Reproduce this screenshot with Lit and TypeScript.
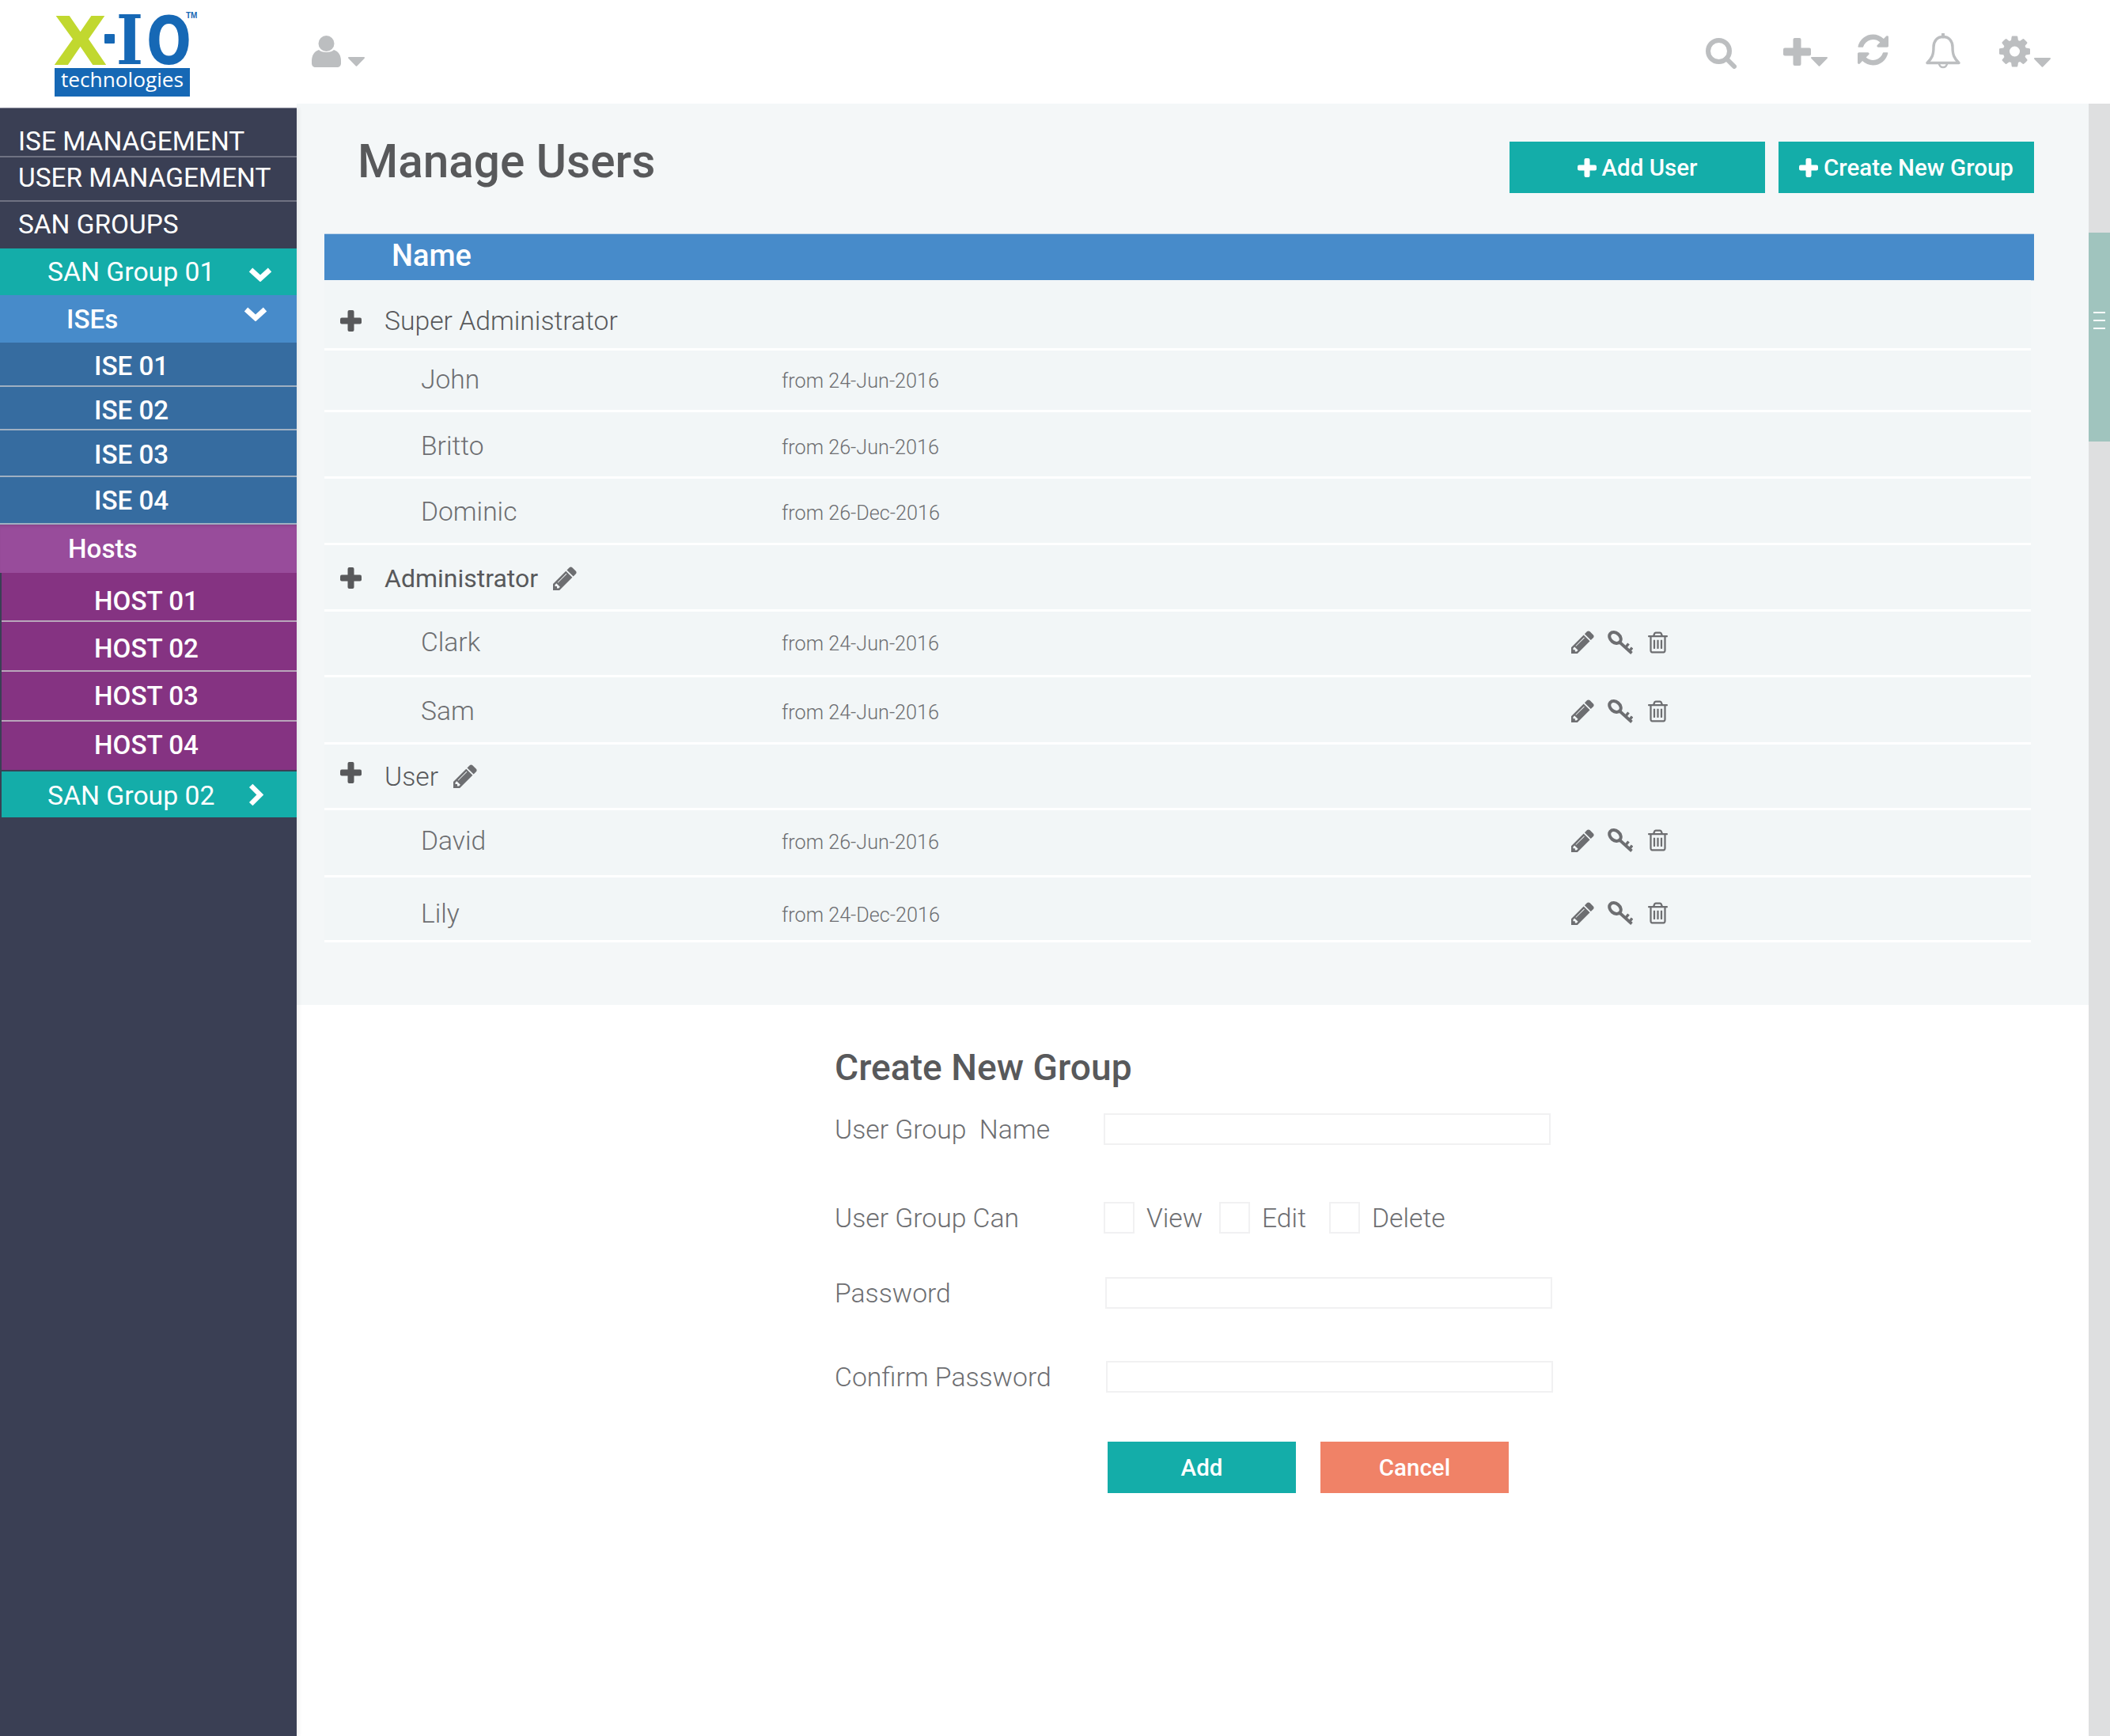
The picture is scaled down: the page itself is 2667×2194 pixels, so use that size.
import { LitElement, html, css, svg } from 'lit';
import { customElement } from 'lit/decorators.js';

const PENCIL = svg`<path d="M491 1536l91-91-235-235-91 91v107h128v128h107zm523-928q0-22-22-22-10 0-17 7l-542 542q-7 7-7 17 0 22 22 22 10 0 17-7l542-542q7-7 7-17zm-54-192l416 416-832 832h-416v-416zm683 96q0 53-37 90l-166 166-416-416 166-165q36-38 90-38 53 0 91 38l235 234q37 39 37 91z"/>`;
const TRASH = svg`<path d="M704 736v576q0 14-9 23t-23 9h-64q-14 0-23-9t-9-23v-576q0-14 9-23t23-9h64q14 0 23 9t9 23zm256 0v576q0 14-9 23t-23 9h-64q-14 0-23-9t-9-23v-576q0-14 9-23t23-9h64q14 0 23 9t9 23zm256 0v576q0 14-9 23t-23 9h-64q-14 0-23-9t-9-23v-576q0-14 9-23t23-9h64q14 0 23 9t9 23zm128 724v-948h-896v948q0 22 7 40.500t14.500 27 10.500 8.500h832q3 0 10.500-8.500t14.500-27 7-40.500zm-672-1076h448l-48-117q-7-9-17-11h-317q-10 2-17 11zm928 32v64q0 14-9 23t-23 9h-96v948q0 83-47 143.500t-113 60.500h-832q-66 0-113-58.500t-47-141.500v-952h-96q-14 0-23-9t-9-23v-64q0-14 9-23t23-9h309l70-167q15-37 54-63t79-26h320q40 0 79 26t54 63l70 167h309q14 0 23 9t9 23z"/>`;
const REFRESH = svg`<path d="M1639 1056q0 5-1 7-64 268-268 434.500t-478 166.500q-146 0-282.500-55t-243.500-157l-129 129q-19 19-45 19t-45-19-19-45v-448q0-26 19-45t45-19h448q26 0 45 19t19 45-19 45l-137 137q71 66 161 102t187 36q134 0 250-65t186-179q11-17 53-117 8-23 30-23h192q13 0 22.500 9.500t9.500 22.500zm25-800v448q0 26-19 45t-45 19h-448q-26 0-45-19t-19-45 19-45l138-138q-148-137-349-137-134 0-250 65t-186 179q-11 17-53 117-8 23-30 23h-199q-13 0-22.500-9.500t-9.500-22.500v-7q65-268 270-434.500t480-166.500q146 0 284 55.500t245 156.500l130-129q19-19 45-19t45 19 19 45z"/>`;
const GEAR = svg`<path d="M1152 896q0-106-75-181t-181-75-181 75-75 181 75 181 181 75 181-75 75-181zm512-109v222q0 12-8 23t-20 13l-185 28q-19 54-39 91 35 50 107 138 10 12 10 25t-9 23q-27 37-99 108t-94 71q-12 0-26-9l-138-108q-44 23-91 38-16 136-29 186-7 28-36 28h-222q-14 0-24.500-8.500t-11.500-21.500l-28-184q-49-16-90-37l-141 107q-10 9-25 9-14 0-25-11-126-114-165-168-7-10-7-23 0-12 8-23 15-21 51-66.500t54-70.500q-27-50-41-99l-183-27q-13-2-21-12.500t-8-23.500v-222q0-12 8-23t19-13l186-28q14-46 39-92-40-57-107-138-10-12-10-24 0-10 9-23 26-36 98.500-107.500t94.500-71.500q13 0 26 10l138 107q44-23 91-38 16-136 29-186 7-28 36-28h222q14 0 24.500 8.500t11.500 21.500l28 184q49 16 90 37l142-107q9-9 24-9 13 0 25 10 129 119 165 170 7 8 7 22 0 12-8 23-15 21-51 66.500t-54 70.500q26 50 41 98l183 28q13 2 21 12.500t8 23.500z"/>`;

const fa = (shape: unknown, w: number, h: number, box = '128 128 1536 1536') =>
  html`<svg class="ic" viewBox=${box} width=${w} height=${h} fill="currentColor">${shape}</svg>`;

const pencil = (s = 29) => fa(PENCIL, s, s);
const trash = () => fa(TRASH, 27, 30);
const key = () => html`<svg class="ic" viewBox="0 0 32 30" width="32" height="30" fill="none" stroke="currentColor">
  <ellipse cx="9.500" cy="9" rx="8" ry="6" stroke-width="4" transform="rotate(40 9.500 9)"/>
  <path d="M15 14.500 L30.500 28.500" stroke-width="3.800"/>
  <path d="M22.500 21.500 L26.500 16.500 M27.500 26 L31 21.500" stroke-width="3.400"/>
</svg>`;
// bar is the thickness of the arms, in px
const plus = (s: number, bar: number) => {
  const a = (s - bar) / 2;
  return html`<svg class="ic" viewBox="0 0 ${s} ${s}" width=${s} height=${s} fill="currentColor">
    <rect x=${a} y="0" width=${bar} height=${s} rx="2"/>
    <rect x="0" y=${a} width=${s} height=${bar} rx="2"/>
  </svg>`;
};
const caret = () => html`<svg class="ic caret" viewBox="0 0 21 12" width="21" height="12" fill="currentColor">
  <path d="M1 0h19a1 1 0 0 1 .7 1.700L11.200 11.500a1 1 0 0 1-1.400 0L.3 1.700A1 1 0 0 1 1 0z"/>
</svg>`;
const chevDown = (w: number, h: number) => html`<svg class="chev" viewBox="0 0 30 20" width=${w} height=${h} fill="none" stroke="#fff" stroke-width="6.500">
  <path d="M3 5 L15 16 L27 5"/>
</svg>`;
const chevRight = () => html`<svg class="chev" viewBox="0 0 20 30" width="20" height="29" fill="none" stroke="#fff" stroke-width="6.500">
  <path d="M4 3 L16 15 L4 27"/>
</svg>`;

interface TableRow {
  name: string;
  h: number;
  dy?: number;
  kind: 'group' | 'user';
  dark?: boolean;
  edit?: boolean;
  date?: string;
  actions?: boolean;
  plusUp?: number;
}

const ROWS: TableRow[] = [
  { kind: 'group', name: 'Super Administrator', h: 89, dy: 16 },
  { kind: 'user', name: 'John', h: 78, dy: -2, date: 'from 24-Jun-2016' },
  { kind: 'user', name: 'Britto', h: 84, dy: 4, date: 'from 26-Jun-2016' },
  { kind: 'user', name: 'Dominic', h: 84, dy: 2, date: 'from 26-Dec-2016' },
  { kind: 'group', name: 'Administrator', h: 84, dy: 2, dark: true, edit: true },
  { kind: 'user', name: 'Clark', h: 83, dy: -3, date: 'from 24-Jun-2016', actions: true },
  { kind: 'user', name: 'Sam', h: 85, dy: 3, date: 'from 24-Jun-2016', actions: true },
  { kind: 'group', name: 'User', h: 83, dy: 0, edit: true, plusUp: 10 },
  { kind: 'user', name: 'David', h: 85, dy: -6, date: 'from 26-Jun-2016', actions: true },
  { kind: 'user', name: 'Lily', h: 82, dy: 11, date: 'from 24-Dec-2016', actions: true },
];

const ISES = [
  { n: 'ISE 01', h: 56, p: 5 },
  { n: 'ISE 02', h: 55, p: 6 },
  { n: 'ISE 03', h: 59, p: 3 },
  { n: 'ISE 04', h: 60, p: 1 },
];
const HOSTS = [
  { n: 'HOST 01', h: 62, p: 10 },
  { n: 'HOST 02', h: 63, p: 5 },
  { n: 'HOST 03', h: 63, p: 0 },
  { n: 'HOST 04', h: 61, p: 0 },
];

@customElement('app-root')
export class AppRoot extends LitElement {
  static styles = css`
    :host {
      display: block;
      width: 2667px;
      height: 2194px;
      overflow: hidden;
      background: #fff;
      font-family: Roboto, "Liberation Sans", sans-serif;
      color: #58595b;
    }

    .ic { display: block; flex: none; }

    header {
      height: 131px;
      display: flex;
      position: relative;
      color: #bcbec0;
    }
    .logo { flex: none; }
    .user-menu {
      display: flex;
      align-items: flex-end;
      gap: 9px;
      margin: 45px 0 0 134px;
      height: 40px;
    }
    .user-menu .caret { margin-bottom: 1px; }
    .tools {
      margin-left: auto;
      display: flex;
      align-items: flex-start;
      padding-right: 75px;
    }
    .tools > * { flex: none; }
    .tool-search { margin: 48px 59px 0 0; }
    .tool-add { margin: 48px 38px 0 0; display: flex; align-items: flex-end; }
    .tool-add .caret { margin-bottom: -1px; }
    .tool-refresh { margin: 43px 47px 0 0; }
    .tool-bell { margin: 42px 49px 0 0; }
    .tool-gear { margin-top: 45px; display: flex; align-items: flex-end; gap: 5px; }

    .body {
      display: flex;
      height: 2063px;
    }

    aside {
      flex: none;
      width: 375px;
      margin-top: 6px;
      background: #3a3f54;
      color: #fff;
      box-shadow: 3px 0 5px rgba(0, 0, 0, 0.06), 0 -1px 0 #8e90a0;
      position: relative;
    }
    .top-item {
      display: flex;
      align-items: center;
      padding-left: 23px;
      border-bottom: 2px solid #6f7282;
      box-sizing: border-box;
      font-size: 33.400px;
    }
    .top-item.last { border-bottom: none; }
    .nav {
      display: flex;
      align-items: center;
      box-sizing: border-box;
      position: relative;
      font-size: 33.200px;
      font-weight: 500;
    }
    .nav .chev { position: absolute; }
    .san { background: #14ada9; padding-left: 60px; font-size: 33.700px; font-weight: 400; }
    .ises-head { background: #478bca; padding-left: 84px; }
    .hosts-head {
      background: #984c9b;
      padding-left: 86px;
      box-shadow: inset 0 4px 4px -3px rgba(0, 0, 0, 0.15);
    }
    .sub {
      padding-left: 119px;
      border-bottom: 2px solid #9fb0c2;
    }
    .ise { background: #366ca0; }
    .host { background: #853382; margin-left: 2px; padding-left: 117px; border-bottom-color: #b9a6bb; }
    .host.end { border-bottom: none; padding-bottom: 3px; }
    .indent { margin: 2px 0 0 2px; padding-left: 58px; padding-top: 2px; }

    main {
      flex: 1;
      min-width: 0;
      display: flex;
      flex-direction: column;
    }
    .panel {
      background: #f4f7f8;
      padding: 48px 69px 79px 35px;
    }
    .panel-head {
      height: 65px;
      display: flex;
      align-items: center;
      margin-bottom: 52px;
      padding-left: 42px;
    }
    h1 {
      margin: -14px auto 0 0;
      font-size: 58.500px;
      font-weight: 500;
      line-height: 65px;
    }
    .btn {
      border: none;
      display: flex;
      align-items: center;
      justify-content: center;
      gap: 7px;
      color: #fff;
      font: 500 29.500px Roboto, "Liberation Sans", sans-serif;
      padding: 0;
    }
    .teal { background: #14ada9; }
    .head-btn { width: 323px; height: 65px; }
    .head-btn + .head-btn { margin-left: 17px; }

    .table-head {
      height: 58px;
      background: #478bca;
      box-shadow: 0 1px 0 #bcd4ea, 0 -1px 0 #bcd4ea;
      color: #fff;
      font-size: 38px;
      font-weight: 500;
      line-height: 54px;
      padding-left: 85px;
    }
    .table-body { margin-right: 4px; background: #f2f6f7; }
    .row {
      display: flex;
      align-items: center;
      box-sizing: border-box;
      border-bottom: 3px solid #fff;
      font-weight: 300;
      color: #58595b;
    }
    .row.group { padding-left: 20px; font-size: 33.700px; }
    .row.group .ic-plus { margin-right: 29px; color: #58595b; }
    .row.group.dark { font-weight: 400; font-size: 32px; }
    .row.group .ic-edit { margin-left: 19px; color: #6d6e71; }
    .row.user { padding-left: 122px; font-size: 33.600px; color: #6d6e71; }
    .uname { width: 456px; flex: none; }
    .date { width: 998px; flex: none; font-size: 25.200px; margin-top: 4px; }
    .actions { display: flex; align-items: center; color: #6d6e71; }
    .actions .ic:nth-child(1) { margin-right: 17px; }
    .actions .ic:nth-child(2) { margin-right: 18px; }

    .form {
      padding: 49px 0 0 680px;
      font-weight: 300;
      color: #6d6e71;
    }
    h2 {
      margin: 0 0 28px;
      font-size: 46.200px;
      font-weight: 500;
      line-height: 60px;
      color: #58595b;
    }
    .field {
      display: flex;
      align-items: center;
      height: 40px;
      font-size: 33.700px;
    }
    .field label { width: 340px; flex: none; white-space: pre; }
    .input {
      width: 565px;
      height: 40px;
      box-sizing: border-box;
      border: 2px solid #f1f1f2;
      background: #fff;
      flex: none;
    }
    .check {
      width: 39px;
      height: 40px;
      box-sizing: border-box;
      border: 2px solid #f1f1f2;
      flex: none;
    }
    .opt { display: flex; align-items: center; }
    .opt span { margin-left: 15px; }
    .form-actions {
      display: flex;
      gap: 31px;
      margin: 62px 0 0 345px;
    }
    .form-btn { width: 238px; height: 65px; }
    .coral { background: #f08267; }

    .scroll {
      flex: none;
      width: 27px;
      background: #dedfe0;
    }
    .thumb {
      margin-top: 163px;
      height: 264px;
      box-sizing: border-box;
      padding-top: 100px;
      background: #a0c4be;
      display: flex;
      flex-direction: column;
      align-items: center;
      gap: 8px;
    }
    .thumb i { display: block; width: 15px; height: 2px; background: #fff; }
  `;

  private renderRow(r: TableRow) {
    const st = `height:${r.h}px;padding-top:${Math.max(r.dy ?? 0, 0)}px;padding-bottom:${Math.max(-(r.dy ?? 0), 0)}px`;
    if (r.kind === 'group') {
      return html`<div class="row group ${r.dark ? 'dark' : ''}" style=${st}>
        <span class="ic-plus" style="margin-bottom:${r.plusUp ?? 0}px">${plus(27, 8)}</span>
        <span>${r.name}</span>
        ${r.edit ? html`<span class="ic-edit">${pencil(30)}</span>` : ''}
      </div>`;
    }
    return html`<div class="row user" style=${st}>
      <span class="uname">${r.name}</span>
      <span class="date">${r.date}</span>
      ${r.actions ? html`<span class="actions">${pencil()}${key()}${trash()}</span>` : ''}
    </div>`;
  }

  render() {
    return html`
      <header>
        <svg class="logo" width="260" height="131" viewBox="0 0 260 131">
          <text x="70" y="81" font-family="Liberation Sans" font-weight="700" font-size="87" fill="#c1d82f" stroke="#c1d82f" stroke-width="2" textLength="63" lengthAdjust="spacingAndGlyphs">X</text>
          <rect x="132" y="43" width="13" height="12" rx="1" fill="#1668b5"/>
          <text x="147" y="81" font-family="DejaVu Serif" font-weight="700" font-size="86" fill="#1668b5" textLength="34" lengthAdjust="spacingAndGlyphs">I</text>
          <text x="185" y="81" font-family="DejaVu Sans" font-weight="700" font-size="84" fill="#1668b5" textLength="57" lengthAdjust="spacingAndGlyphs">O</text>
          <text x="235" y="23" font-family="Liberation Sans" font-weight="700" font-size="10" fill="#1668b5">TM</text>
          <rect x="69" y="86" width="171" height="36" fill="#1668b5"/>
          <text x="77" y="110" font-family="Open Sans" font-size="25" fill="#fff" textLength="155" lengthAdjust="spacingAndGlyphs">technologies</text>
        </svg>
        <div class="user-menu">
          <svg class="ic" viewBox="0 0 37 40" width="37" height="40" fill="currentColor">
            <circle cx="18.500" cy="10" r="10"/>
            <path d="M9 18c3 4 16 4 19 0 6 2 9 7 9 14v3c0 3-2 5-5 5H5c-3 0-5-2-5-5v-3c0-7 3-12 9-14z"/>
          </svg>
          ${caret()}
        </div>
        <div class="tools">
          <svg class="ic tool-search" viewBox="0 0 39 39" width="39" height="39" fill="none" stroke="currentColor">
            <circle cx="16.500" cy="16.500" r="13.500" stroke-width="6"/>
            <path d="M26 26 L36 36" stroke-width="6" stroke-linecap="round"/>
          </svg>
          <div class="tool-add">${plus(35, 10)}${caret()}</div>
          <span class="tool-refresh">${fa(REFRESH, 39, 40)}</span>
          <svg class="ic tool-bell" viewBox="0 0 44 45" width="44" height="45" fill="none" stroke="currentColor" stroke-width="3.400" stroke-linejoin="round">
            <path d="M22 4.500c-8 0-12 6-12 13 0 10-2 14-8 20h40c-6-6-8-10-8-20 0-7-4-13-12-13z"/>
            <path d="M22 1v3.500" stroke-width="4" stroke-linecap="round"/>
            <path d="M17 38a5 5 0 0 0 10 0" stroke-width="2.600"/>
          </svg>
          <div class="tool-gear">${fa(GEAR, 39, 40)}${caret()}</div>
        </div>
      </header>
      <div class="body">
        <aside>
          <div class="top-item" style="height:62px;padding-top:22px">ISE MANAGEMENT</div>
          <div class="top-item" style="height:56px;padding-bottom:3px">USER MANAGEMENT</div>
          <div class="top-item last" style="height:59px;padding-bottom:3px">SAN GROUPS</div>
          <div class="nav san" style="height:59px">SAN Group 01
            <span class="chev" style="left:314px;top:22px">${chevDown(30, 20)}</span>
          </div>
          <div class="nav ises-head" style="height:60px">ISEs
            <span class="chev" style="left:308px;top:13px">${chevDown(30, 20)}</span>
          </div>
          ${ISES.map((r) => html`<div class="nav sub ise" style="height:${r.h}px;padding-top:${r.p}px">${r.n}</div>`)}
          <div class="nav hosts-head" style="height:61px">Hosts</div>
          ${HOSTS.map((r, i) => html`<div class="nav sub host ${i === 3 ? 'end' : ''}" style="height:${r.h}px;padding-top:${r.p}px">${r.n}</div>`)}
          <div class="nav san indent" style="height:58px">SAN Group 02
            <span class="chev" style="left:311px;top:15px">${chevRight()}</span>
          </div>
        </aside>
        <main>
          <section class="panel">
            <div class="panel-head">
              <h1>Manage Users</h1>
              <button class="btn teal head-btn">${plus(24, 7)}Add User</button>
              <button class="btn teal head-btn">${plus(24, 7)}Create New Group</button>
            </div>
            <div class="table-head">Name</div>
            <div class="table-body">${ROWS.map((r) => this.renderRow(r))}</div>
          </section>
          <section class="form">
            <h2>Create New Group</h2>
            <div class="field"><label>User Group  Name</label><div class="input"></div></div>
            <div class="field" style="margin-top:72px">
              <label>User Group Can</label>
              <div class="opt" style="width:146px"><div class="check"></div><span>View</span></div>
              <div class="opt" style="width:139px"><div class="check"></div><span>Edit</span></div>
              <div class="opt"><div class="check"></div><span>Delete</span></div>
            </div>
            <div class="field" style="margin-top:55px"><label>Password</label><div class="input" style="margin-left:2px"></div></div>
            <div class="field" style="margin-top:66px"><label>Confirm Password</label><div class="input" style="margin-left:3px"></div></div>
            <div class="form-actions">
              <button class="btn teal form-btn">Add</button>
              <button class="btn coral form-btn">Cancel</button>
            </div>
          </section>
        </main>
        <div class="scroll">
          <div class="thumb"><i></i><i></i><i></i></div>
        </div>
      </div>
    `;
  }
}
